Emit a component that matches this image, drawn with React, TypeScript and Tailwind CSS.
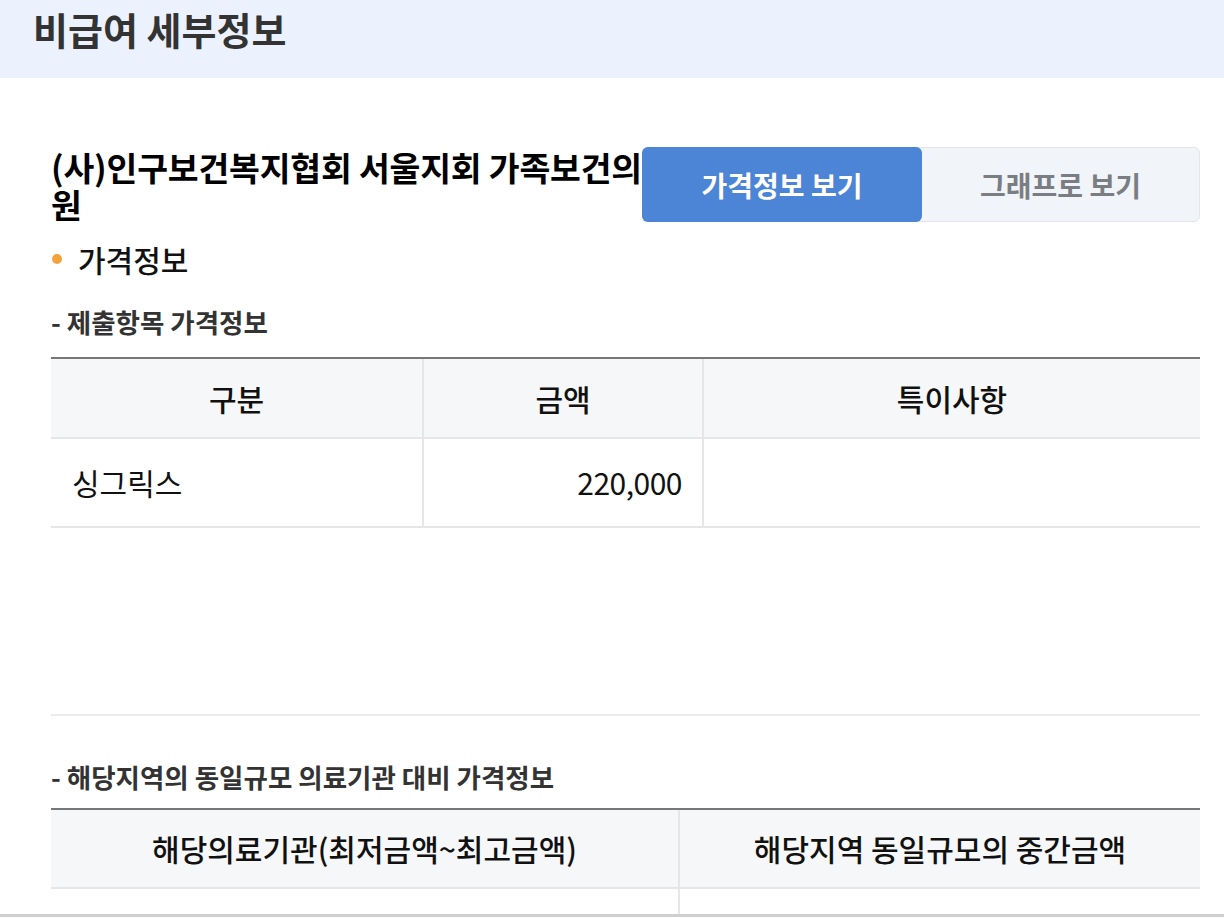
const font = { fontFamily: '"Noto Sans CJK KR", "Noto Sans", sans-serif' };

export default function App() {
  return (
    <div className="w-[1224px] h-[918px] overflow-hidden bg-white text-[#111]" style={font}>
      {/* 상단 타이틀 */}
      <div className="h-[78px] bg-[#ebf1fd] pl-[33px] pt-[7px]">
        <h1 className="text-[38px] leading-[44px] font-bold text-[#333]">비급여 세부정보</h1>
      </div>

      <div className="pl-[51px] pr-[24px]">
        {/* 기관명 + 탭 */}
        <div className="mt-[69px] flex justify-between items-start">
          <h2 className="w-[592px] mt-[1px] text-[33.5px] leading-[37px] font-bold tracking-[-0.2px] text-black">
            (사)인구보건복지협회 서울지회 가족보건의원
          </h2>
          <div className="flex h-[75px] w-[559px] rounded-[6px] border border-[#e2e6ea] bg-[#f1f4f8]">
            <button className="w-[280px] -my-px -ml-px rounded-[6px] bg-[#4c84d6] text-[28px] font-bold text-white">
              가격정보 보기
            </button>
            <button className="flex-1 text-[28px] font-bold text-[#7a7d82]">그래프로 보기</button>
          </div>
        </div>

        {/* 가격정보 */}
        <div className="mt-[19px] flex items-center h-[36px]">
          <span className="ml-[1px] w-[10px] h-[10px] rounded-full bg-[#f4a23c]" />
          <span className="ml-[16px] text-[30px] leading-[36px] font-medium">가격정보</span>
        </div>

        <p className="mt-[29px] text-[26.5px] leading-[32px] font-bold text-[#333]">- 제출항목 가격정보</p>

        <div className="mt-[19px] border-t-2 border-[#777]">
          <div className="flex h-[80px] bg-[#f6f7f9] border-b-2 border-[#e6e6e6] text-[30px] font-medium">
            <div className="w-[371px] flex items-center justify-center">구분</div>
            <div className="w-[280px] flex items-center justify-center border-l-2 border-[#e6e6e6]">금액</div>
            <div className="flex-1 flex items-center justify-center border-l-2 border-[#e6e6e6]">특이사항</div>
          </div>
          <div className="flex h-[89px] border-b-2 border-[#e6e6e6] text-[30px]">
            <div className="w-[371px] flex items-center pl-[21px]">싱그릭스</div>
            <div className="w-[280px] flex items-center justify-end pr-[20px] border-l-2 border-[#e6e6e6] tracking-[-0.5px]">220,000</div>
            <div className="flex-1 border-l-2 border-[#e6e6e6]" />
          </div>
        </div>

        <div className="h-[188px] border-b-2 border-[#ececec]" />

        <p className="mt-[45px] text-[26.5px] leading-[32px] font-bold text-[#333]">
          - 해당지역의 동일규모 의료기관 대비 가격정보
        </p>

        <div className="mt-[15px] border-t-2 border-[#777]">
          <div className="flex h-[79px] bg-[#f6f7f9] border-b-2 border-[#e6e6e6] text-[30px] font-medium">
            <div className="w-[627px] flex items-center justify-center">해당의료기관(최저금액~최고금액)</div>
            <div className="flex-1 flex items-center justify-center border-l-2 border-[#e6e6e6]">해당지역 동일규모의 중간금액</div>
          </div>
          <div className="flex h-[25px]">
            <div className="w-[627px]" />
            <div className="flex-1 border-l-2 border-[#e6e6e6]" />
          </div>
        </div>
      </div>
      <div className="border-t-[3px] border-[#cfcfcf]" />
    </div>
  );
}
